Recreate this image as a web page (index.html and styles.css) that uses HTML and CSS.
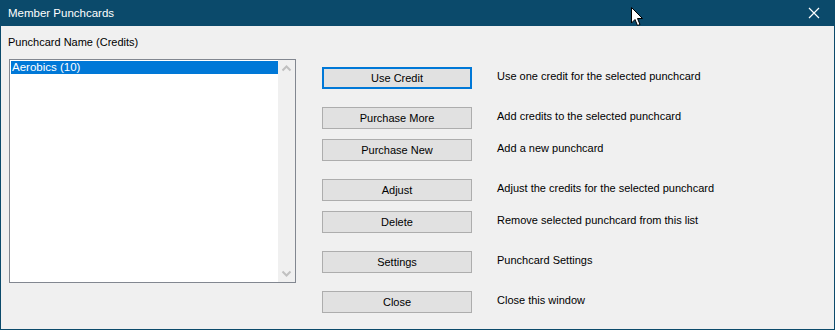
FILE: index.html
```html
<!DOCTYPE html>
<html lang="en">
<head>
    <meta charset="UTF-8">
    <meta name="viewport" content="width=device-width, initial-scale=1.0">
    <title>Member Punchcards</title>
    <link rel="stylesheet" href="styles.css">
</head>
<body>
    <div class="window">
        <div class="titlebar">
            <span class="title">Member Punchcards</span>
            <svg class="close-x" width="12" height="12" viewBox="0 0 12 12">
                <path d="M1 1 L11 11 M11 1 L1 11" stroke="#fff" stroke-width="1.2" fill="none"/>
            </svg>
            <svg class="cursor" width="13" height="20" viewBox="0 0 13 20">
                <path d="M0.5 0.5 L0.5 16 L4 12.5 L6.5 18.5 L9 17.5 L6.5 11.5 L11.5 11.5 Z" fill="#fff" stroke="#000" stroke-width="1"/>
            </svg>
        </div>
        <div class="client">
            <div class="label">Punchcard Name (Credits)</div>
            <div class="content">
                <div class="listbox">
                    <div class="items">
                        <div class="item selected">Aerobics (10)</div>
                    </div>
                    <div class="scrollbar">
                        <svg width="17" height="17" viewBox="0 0 17 17">
                            <path d="M4.5 10.5 L8.5 6.5 L12.5 10.5" stroke="#c0c0c0" stroke-width="2" fill="none"/>
                        </svg>
                        <svg width="17" height="17" viewBox="0 0 17 17">
                            <path d="M4.5 6.5 L8.5 10.5 L12.5 6.5" stroke="#c0c0c0" stroke-width="2" fill="none"/>
                        </svg>
                    </div>
                </div>
                <div class="actions">
                    <div class="row">
                        <button class="btn default">Use Credit</button>
                        <span class="desc">Use one credit for the selected punchcard</span>
                    </div>
                    <div class="row gap-lg">
                        <button class="btn">Purchase More</button>
                        <span class="desc">Add credits to the selected punchcard</span>
                    </div>
                    <div class="row gap-sm">
                        <button class="btn">Purchase New</button>
                        <span class="desc">Add a new punchcard</span>
                    </div>
                    <div class="row gap-lg">
                        <button class="btn">Adjust</button>
                        <span class="desc">Adjust the credits for the selected punchcard</span>
                    </div>
                    <div class="row gap-sm">
                        <button class="btn">Delete</button>
                        <span class="desc">Remove selected punchcard from this list</span>
                    </div>
                    <div class="row gap-lg">
                        <button class="btn">Settings</button>
                        <span class="desc">Punchcard Settings</span>
                    </div>
                    <div class="row gap-lg">
                        <button class="btn">Close</button>
                        <span class="desc">Close this window</span>
                    </div>
                </div>
            </div>
        </div>
    </div>
</body>
</html>
```

FILE: styles.css
```css
html,body{
    margin:0px;
    padding:0px;
}
body{
    width:835px;
    height:330px;
    font-family:"Segoe UI","Liberation Sans",Arial,sans-serif;
    font-size:11px;
    color:#000;
}
.window{
    box-sizing:border-box;
    width:835px;
    height:330px;
    border:1px solid #0b4a6b;
    border-top:none;
    background-color:#f0f0f0;
    display:flex;
    flex-direction:column;
}
.titlebar{
    position:relative;
    height:26px;
    margin:0 -1px;
    background-color:#0b4a6b;
    color:#fff;
    display:flex;
    align-items:center;
    padding-left:8px;
}
.title{
    font-size:11.5px;
    line-height:16px;
    margin-top:-1px;
}
.close-x{
    position:absolute;
    right:15px;
    top:7px;
}
.cursor{
    position:absolute;
    left:631px;
    top:7px;
}
.client{
    flex:1;
}
.label{
    margin:8px 0 0 7px;
    line-height:16px;
}
.content{
    display:flex;
    align-items:flex-start;
    margin-top:9px;
}
.listbox{
    box-sizing:border-box;
    width:287px;
    height:224px;
    margin-left:8px;
    border:1px solid #828790;
    background-color:#fff;
    display:flex;
}
.items{
    flex:1;
    padding:1px 0 0 1px;
}
.item{
    height:13px;
    line-height:13px;
    padding-left:1px;
    font-size:11.5px;
}
.item.selected{
    background-color:#0078d7;
    color:#fff;
}
.scrollbar{
    width:17px;
    background-color:#f0f0f0;
    display:flex;
    flex-direction:column;
    justify-content:space-between;
}
.scrollbar svg{
    display:block;
}
.actions{
    margin-left:26px;
    margin-top:8px;
    display:flex;
    flex-direction:column;
}
.row{
    display:flex;
    align-items:flex-start;
}
.row.gap-lg{
    margin-top:18px;
}
.row.gap-sm{
    margin-top:10px;
}
.btn{
    box-sizing:border-box;
    width:150px;
    height:22px;
    padding:0;
    border:1px solid #adadad;
    background-color:#e1e1e1;
    font-family:inherit;
    font-size:11px;
    color:#000;
}
.btn.default{
    border:2px solid #0078d7;
}
.desc{
    margin-left:25px;
    line-height:16px;
    padding-top:1px;
}
```
